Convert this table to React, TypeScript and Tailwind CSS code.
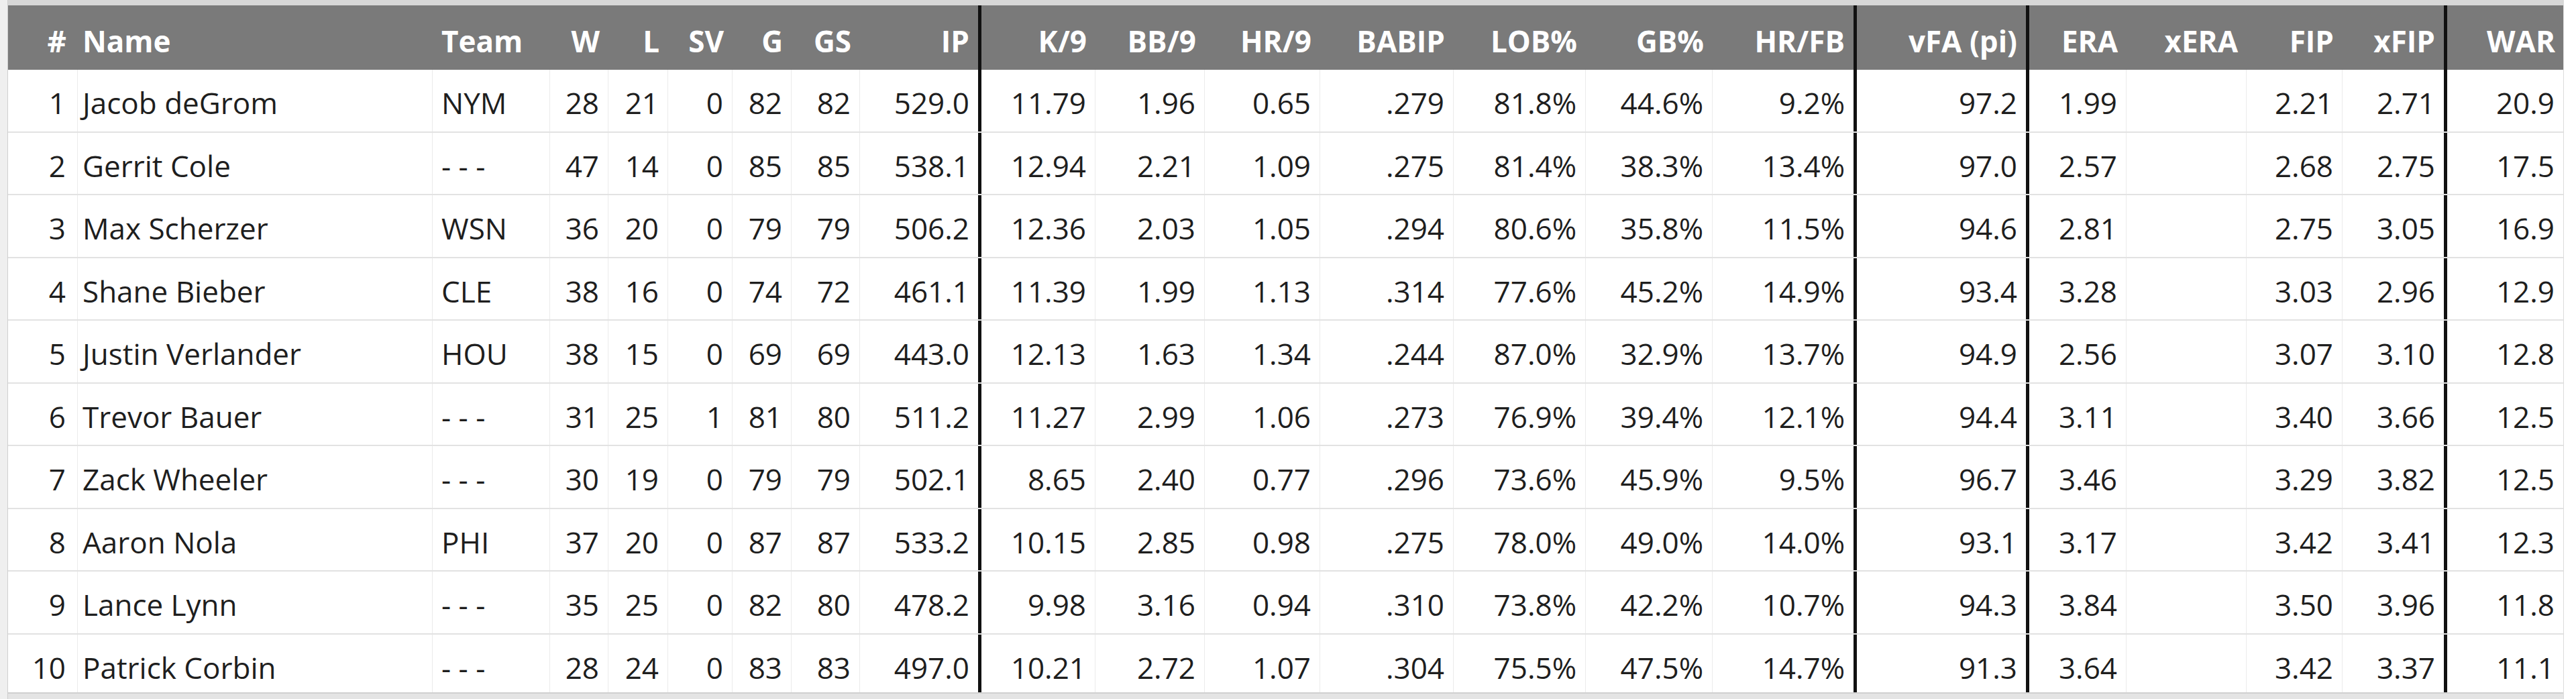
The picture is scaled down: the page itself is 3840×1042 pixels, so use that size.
import React from 'react'

type Col = {
  label: string
  left?: boolean
  thick?: boolean
  pad: string
}

const cols: Col[] = [
  { label: '#', pad: 'pr-[17px]' },
  { label: 'Name', left: true, pad: 'pl-[7px]' },
  { label: 'Team', left: true, pad: 'pl-[13px]' },
  { label: 'W', pad: 'pr-[13px]' },
  { label: 'L', pad: 'pr-[13px]' },
  { label: 'SV', pad: 'pr-[13px]' },
  { label: 'G', pad: 'pr-[13px]' },
  { label: 'GS', pad: 'pr-[13px]' },
  { label: 'IP', thick: true, pad: 'pr-[13px]' },
  { label: 'K/9', pad: 'pr-[13px]' },
  { label: 'BB/9', pad: 'pr-[13px]' },
  { label: 'HR/9', pad: 'pr-[13px]' },
  { label: 'BABIP', pad: 'pr-[13px]' },
  { label: 'LOB%', pad: 'pr-[13px]' },
  { label: 'GB%', pad: 'pr-[13px]' },
  { label: 'HR/FB', thick: true, pad: 'pr-[13px]' },
  { label: 'vFA (pi)', thick: true, pad: 'pr-[13px]' },
  { label: 'ERA', pad: 'pr-[13px]' },
  { label: 'xERA', pad: 'pr-[13px]' },
  { label: 'FIP', pad: 'pr-[13px]' },
  { label: 'xFIP', thick: true, pad: 'pr-[13px]' },
  { label: 'WAR', pad: 'pr-[13px]' },
]

const rows: string[][] = [
  ['1', 'Jacob deGrom', 'NYM', '28', '21', '0', '82', '82', '529.0', '11.79', '1.96', '0.65', '.279', '81.8%', '44.6%', '9.2%', '97.2', '1.99', '', '2.21', '2.71', '20.9'],
  ['2', 'Gerrit Cole', '- - -', '47', '14', '0', '85', '85', '538.1', '12.94', '2.21', '1.09', '.275', '81.4%', '38.3%', '13.4%', '97.0', '2.57', '', '2.68', '2.75', '17.5'],
  ['3', 'Max Scherzer', 'WSN', '36', '20', '0', '79', '79', '506.2', '12.36', '2.03', '1.05', '.294', '80.6%', '35.8%', '11.5%', '94.6', '2.81', '', '2.75', '3.05', '16.9'],
  ['4', 'Shane Bieber', 'CLE', '38', '16', '0', '74', '72', '461.1', '11.39', '1.99', '1.13', '.314', '77.6%', '45.2%', '14.9%', '93.4', '3.28', '', '3.03', '2.96', '12.9'],
  ['5', 'Justin Verlander', 'HOU', '38', '15', '0', '69', '69', '443.0', '12.13', '1.63', '1.34', '.244', '87.0%', '32.9%', '13.7%', '94.9', '2.56', '', '3.07', '3.10', '12.8'],
  ['6', 'Trevor Bauer', '- - -', '31', '25', '1', '81', '80', '511.2', '11.27', '2.99', '1.06', '.273', '76.9%', '39.4%', '12.1%', '94.4', '3.11', '', '3.40', '3.66', '12.5'],
  ['7', 'Zack Wheeler', '- - -', '30', '19', '0', '79', '79', '502.1', '8.65', '2.40', '0.77', '.296', '73.6%', '45.9%', '9.5%', '96.7', '3.46', '', '3.29', '3.82', '12.5'],
  ['8', 'Aaron Nola', 'PHI', '37', '20', '0', '87', '87', '533.2', '10.15', '2.85', '0.98', '.275', '78.0%', '49.0%', '14.0%', '93.1', '3.17', '', '3.42', '3.41', '12.3'],
  ['9', 'Lance Lynn', '- - -', '35', '25', '0', '82', '80', '478.2', '9.98', '3.16', '0.94', '.310', '73.8%', '42.2%', '10.7%', '94.3', '3.84', '', '3.50', '3.96', '11.8'],
  ['10', 'Patrick Corbin', '- - -', '28', '24', '0', '83', '83', '497.0', '10.21', '2.72', '1.07', '.304', '75.5%', '47.5%', '14.7%', '91.3', '3.64', '', '3.42', '3.37', '11.1'],
]

const grid =
  'grid grid-cols-[104px_529px_175px_87px_89px_96px_88px_102px_181px_170px_163px_172px_199px_197px_189px_215px_257px_145px_179px_143px_156px_174px]'

export default function App() {
  return (
    <div
      className="h-[1042px] w-[3840px] overflow-hidden bg-white flex"
      style={{ fontFamily: '"Open Sans", "Noto Sans", sans-serif' }}
    >
      {/* left gutter */}
      <div className="w-[12px] bg-[#efefef] border-r border-[#cfcfcf]" />

      <div className="w-[3810px] flex flex-col border-r border-[#dcdcdc]">
        <div className="h-[8px] bg-[#d7d7d7]" />

        <div className="flex-1 overflow-hidden">
          {/* Header */}
          <div className={`${grid} h-[96px] bg-[#7a7a7a] text-white font-bold text-[44px] leading-[44px]`}>
            {cols.map((c, i) => (
              <div
                key={i}
                className={`flex items-center pt-[9px] ${c.left ? 'justify-start' : 'justify-end'} ${c.pad} ${
                  c.thick ? 'border-r-[5px] border-[#111]' : ''
                }`}
              >
                {c.label}
              </div>
            ))}
          </div>

          {/* Body */}
          {rows.map((r, ri) => (
            <div
              key={ri}
              className={`${grid} h-[93.5px] border-b-2 border-[#e2e2e2] text-[#1e1e1e] text-[44px] leading-[44px]`}
            >
              {r.map((v, ci) => {
                const c = cols[ci]
                return (
                  <div
                    key={ci}
                    className={`flex items-center pt-[7px] whitespace-nowrap ${c.left ? 'justify-start' : 'justify-end'} ${
                      c.pad
                    } ${c.thick ? 'border-r-[5px] border-[#111]' : 'border-r border-[#ebebeb]'}`}
                  >
                    {v}
                  </div>
                )
              })}
            </div>
          ))}
        </div>

        <div className="h-[10px] bg-[#e4e4e4] border-t-2 border-[#d0d0d0]" />
      </div>

      <div className="flex-1 bg-white" />
    </div>
  )
}
